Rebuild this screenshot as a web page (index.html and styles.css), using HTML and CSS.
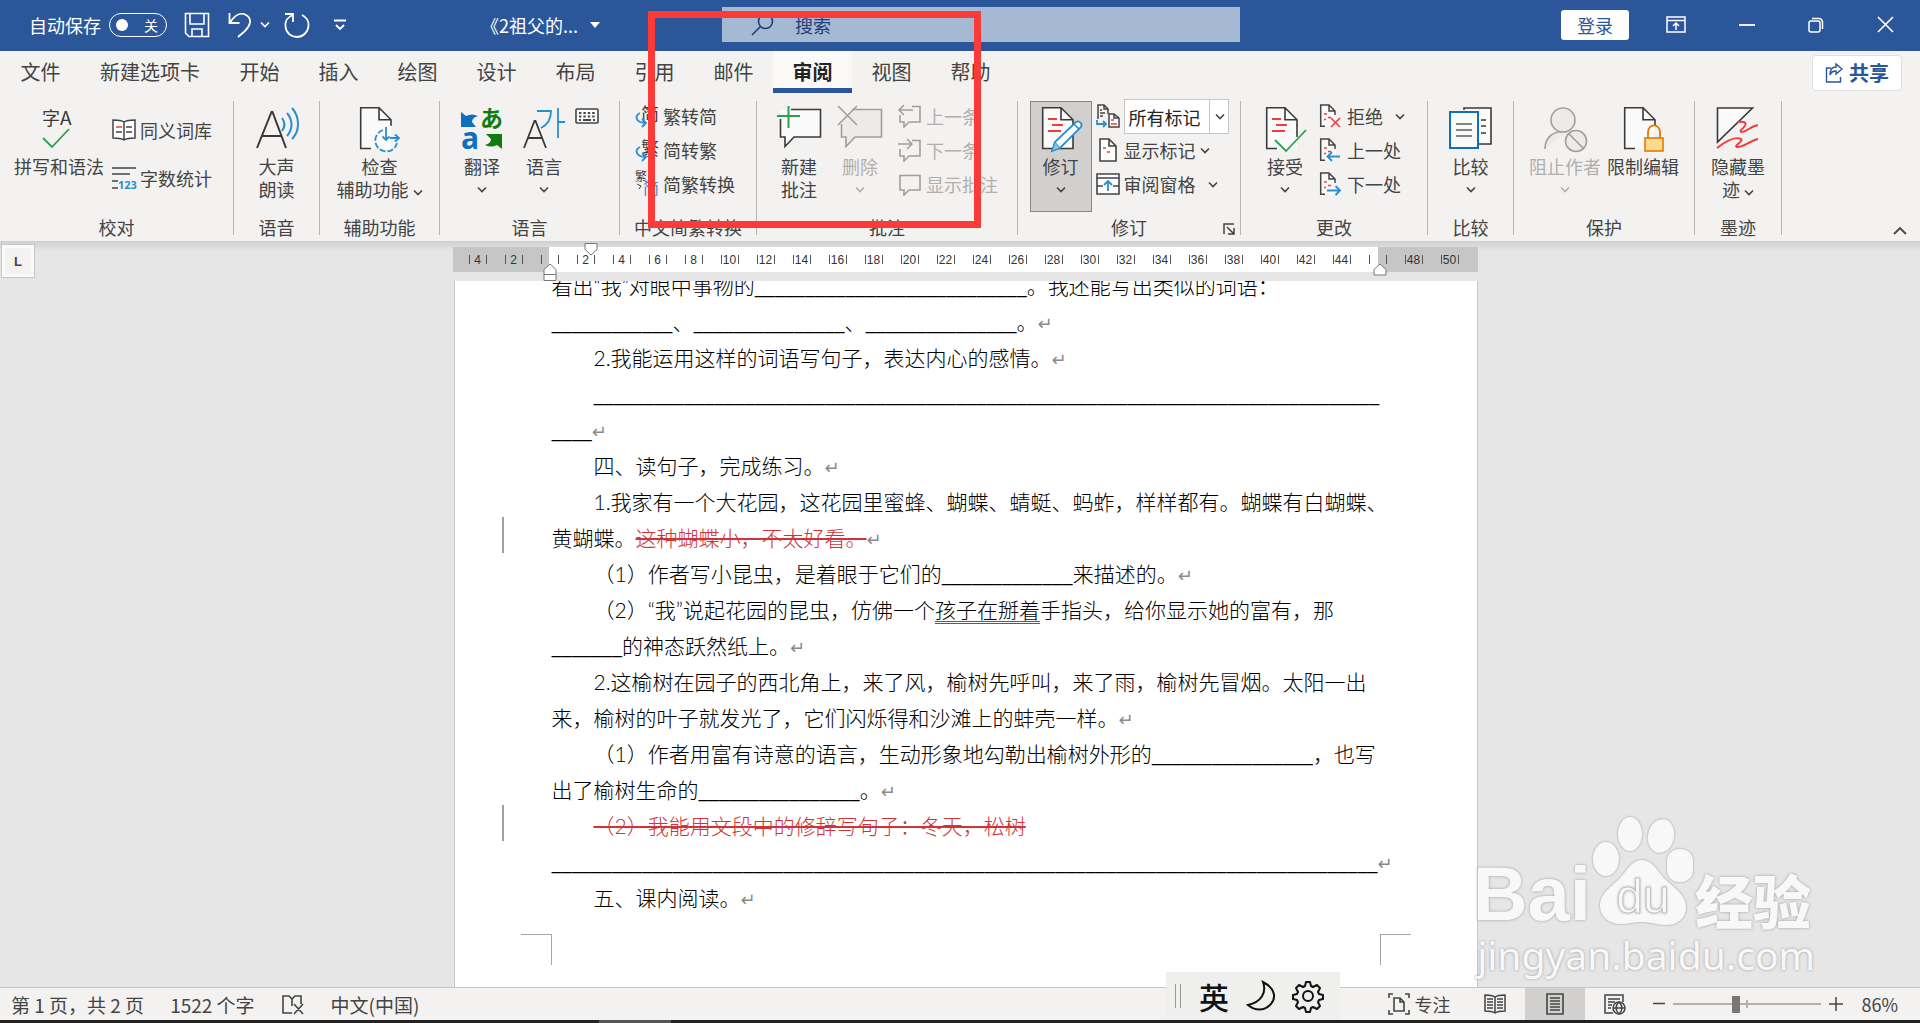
FILE: index.html
```html
<!DOCTYPE html>
<html lang="zh-CN">
  <head>
    <meta charset="UTF-8" />
    <title>《2祖父的园子》 - Word</title>
    <link rel="stylesheet" href="styles.css">
  </head>
  <body>
    <!-- shared icon shapes -->
    <svg class="sprite" aria-hidden="true">
      <symbol id="chevron" viewBox="0 0 10 7"><path d="M1 1.5l4 4 4-4" fill="none" stroke="currentColor" stroke-width="1.6" /></symbol>
      <symbol id="page-sm" viewBox="0 0 24 24">
        <path d="M2.5.8h9l5.500 5.500v16h-14.500z" fill="#fafafa" />
        <path d="M6 22.3H1.700V1H10l6 6v4M10 1v6h6" fill="none" stroke="#444" stroke-width="1.5" />
        <path d="M5 10h3M9 13.5h3M5 15.500h2" stroke="#f23c3c" stroke-width="1.5" />
      </symbol>
      <symbol id="page-lg" viewBox="0 0 44 44">
        <path d="M4 1h19l11 11v30H4z" fill="#fafafa" />
        <path d="M14 41.5H3.700V.8H22l12 12v6M22 .8v12h12" fill="none" stroke="#3b3a39" stroke-width="1.6" />
      </symbol>
      <symbol id="bubble" viewBox="0 0 24 24"><path d="M2 3.5h20V18h-11l-5 5v-5H2z" fill="none" stroke="#a19f9d" stroke-width="1.6" /></symbol>
      <symbol id="bubble-cut" viewBox="0 0 24 24"><path d="M14 2.5h8V18h-11l-5 5v-5H2v-7" fill="none" stroke="#a19f9d" stroke-width="1.6" /></symbol>
    </svg>

    <header class="titlebar">
      <div class="quick">
        <span>自动保存</span>
        <button class="toggle" role="switch" aria-checked="false" aria-label="自动保存"><i></i>关</button>
        <button class="save" aria-label="保存">
          <svg width="26" height="26" viewBox="0 0 26 26" fill="none" stroke="#fff" stroke-width="1.6"><path d="M1.5 1.5h23v23H5l-3.500-3.500zM6 1.5V12h14V1.5M8 24.5V17h10v7.500" /></svg>
        </button>
        <button class="undo" aria-label="撤消">
          <svg width="24" height="26" viewBox="0 0 24 26" fill="none" stroke="#fff" stroke-width="1.8"><path d="M1.5 1v10h10M2 10.5C7 3 13 0 18 3c7 4 4 11-1 16l-7 6" /></svg>
        </button>
        <button class="undo-more" aria-label="撤消选项"><svg width="10" height="7"><use href="#chevron" /></svg></button>
        <button class="redo" aria-label="恢复">
          <svg width="26" height="26" viewBox="0 0 26 26" fill="none" stroke="#fff" stroke-width="1.8"><path d="M1 2h8v8M9 3C3 5 1 10 1.5 14.5 2 21 7 25 13 25s11-5 11.500-11C25 9 22 5 18 3" /></svg>
        </button>
        <button class="customize" aria-label="自定义快速访问工具栏">
          <svg width="12" height="12" viewBox="0 0 12 12" fill="none" stroke="#fff" stroke-width="1.8"><path d="M0 1.5h12M2 6l4 4 4-4" /></svg>
        </button>
      </div>
      <button class="doc-title">《2祖父的... <svg width="10" height="6"><path d="M0 0h10l-5 6z" fill="#fff" /></svg></button>
      <label class="search">
        <svg width="24" height="24" viewBox="0 0 24 24" fill="none" stroke="#1d4079" stroke-width="1.6"><circle cx="14.5" cy="8.5" r="7" /><path d="M9.5 13.5L1 22" /></svg>
        <input type="text" placeholder="搜索" aria-label="搜索" />
      </label>
      <div class="window-tools">
        <button class="login">登录</button>
        <button aria-label="功能区显示选项"><svg width="20" height="17" viewBox="0 0 20 17" fill="none" stroke="#fff" stroke-width="1.5"><path d="M1 1h18v15H1zM1 4.5h18M10 14V7M7 10l3-3 3 3" /></svg></button>
        <button aria-label="最小化"><svg width="16" height="16"><path d="M0 8h16" stroke="#fff" stroke-width="1.8" /></svg></button>
        <button aria-label="还原"><svg width="16" height="16" viewBox="0 0 16 16" fill="none" stroke="#fff" stroke-width="1.5"><rect x="1" y="4" width="11" height="11" rx="2" /><path d="M4 1.5h7a3.500 3.500 0 0 1 3.500 3.500v7" /></svg></button>
        <button aria-label="关闭"><svg width="17" height="17" viewBox="0 0 17 17"><path d="M1 1l15 15M16 1L1 16" stroke="#fff" stroke-width="1.6" /></svg></button>
      </div>
    </header>

    <nav class="tabs">
      <button>文件</button>
      <button>新建选项卡</button>
      <button>开始</button>
      <button>插入</button>
      <button>绘图</button>
      <button>设计</button>
      <button>布局</button>
      <button>引用</button>
      <button>邮件</button>
      <button class="active">审阅</button>
      <button>视图</button>
      <button>帮助</button>
      <button class="share">
        <svg width="18" height="20" viewBox="0 0 18 20" fill="none" stroke="#2b579a" stroke-width="1.4"><path d="M6 5H1.5v14h14v-5M11 1l6 5-6 5V8c-3 0-5 1-6 4 0-5 2-8 6-8z" /></svg>
        共享
      </button>
    </nav>

    <main class="ribbon">
      <section class="group proofing">
        <div class="group-body">
          <button class="big">
            <svg width="44" height="44" viewBox="0 0 44 44"><text x="5" y="18" class="glyph" font-size="18">字</text><text x="23" y="18" class="glyph" font-size="19">A</text><path d="M6 31l9 9 17-18" fill="none" stroke="#2f9e4f" stroke-width="1.8" /></svg>
            <span>拼写和语法</span>
          </button>
          <div class="stack loose">
            <button class="small"><svg width="24" height="24" viewBox="0 0 24 24" fill="none" stroke="#444" stroke-width="1.5"><path d="M12 4C9 2 5 2 1 2v18c4 0 8 0 11 2 3-2 7-2 11-2V2c-4 0-8 0-11 2zv18" fill="#fff" /><path d="M4 9h6" stroke="#f23c3c" /><path d="M4 14h6M14 9h6M14 14h6" /></svg>同义词库</button>
            <button class="small"><svg width="24" height="24" viewBox="0 0 24 24"><path d="M0 2h24M0 8h18M0 15h6M0 22h6" stroke="#444" stroke-width="1.6" /><text x="6" y="23" class="digits">123</text></svg>字数统计</button>
          </div>
        </div>
        <h2>校对</h2>
      </section>

      <section class="group speech">
        <div class="group-body">
          <button class="big">
            <svg width="44" height="44" viewBox="0 0 44 44" fill="none"><path d="M2 41L16.5 5h1L31 41M7 29h19" stroke="#3b3a39" stroke-width="2" /><path d="M27 11c3 4 3 9 0 13M32 6c6 7 6 16 0 23M37 1c8 9 8 23 0 31" stroke="#2b8dd0" stroke-width="2" /></svg>
            <span>大声<br>朗读</span>
          </button>
        </div>
        <h2>语音</h2>
      </section>

      <section class="group access">
        <div class="group-body">
          <button class="big">
            <svg width="44" height="44" viewBox="0 0 44 44"><use href="#page-lg" /><g fill="none" stroke="#2b8dd0" stroke-width="1.8"><path d="M26 23a11 11 0 1 0 14 13" stroke-dasharray="6 2" /><path d="M29 20v13M25.5 29.5L29 33l3.500-3.500M33 31h8M38 27.5l4 3.500-4 3.500" /></g></svg>
            <span>检查<br>辅助功能 <svg width="10" height="7"><use href="#chevron" /></svg></span>
          </button>
        </div>
        <h2>辅助功能</h2>
      </section>

      <section class="group language">
        <div class="group-body">
          <button class="big">
            <svg width="44" height="44" viewBox="0 0 44 44"><path d="M1 5l5 4c4-2 8-2 12 0-4 1-6 3-6 6l4 5H1z" fill="#106ebe" /><text x="20" y="20" class="kana">あ</text><text x="1" y="42" class="latin">a</text><path d="M42 42l-5-4c-4 2-8 2-12 0 4-1 6-3 6-6l-5-5h16z" fill="#107c10" /></svg>
            <span>翻译</span>
            <svg width="10" height="7"><use href="#chevron" /></svg>
          </button>
          <button class="big">
            <svg width="44" height="44" viewBox="0 0 44 44" fill="none"><path d="M2 41l10.500-27h1L24 41M6 31h14" stroke="#3b3a39" stroke-width="1.8" /><path d="M15 4h14c0 9-4 14-10 17M36 1v30M36 15h7" stroke="#2b8dd0" stroke-width="1.8" /></svg>
            <span>语言</span>
            <svg width="10" height="7"><use href="#chevron" /></svg>
          </button>
          <button class="keyboard" aria-label="键盘"><svg width="24" height="16" viewBox="0 0 24 16"><rect x="1" y="1" width="22" height="14" rx="1" fill="#fff" stroke="#444" stroke-width="1.6" /><path d="M4 5h16M4 8.5h16" stroke="#444" stroke-width="2.2" stroke-dasharray="2.4 2" /><path d="M4 12h2m2 0h8m2 0h2" stroke="#444" stroke-width="2" /></svg></button>
        </div>
        <h2>语言</h2>
      </section>

      <section class="group convert">
        <div class="group-body">
          <div class="stack">
            <button class="small"><svg width="24" height="24" viewBox="0 0 24 24"><text x="6" y="17" class="glyph" font-size="18">简</text><path d="M5 9c-6 3-4 10 6 10M7 15l4 4-4 4" fill="none" stroke="#2b8dd0" stroke-width="1.8" /></svg>繁转简</button>
            <button class="small"><svg width="24" height="24" viewBox="0 0 24 24"><text x="6" y="17" class="glyph" font-size="18">繁</text><path d="M5 9c-6 3-4 10 6 10M7 15l4 4-4 4" fill="none" stroke="#2b8dd0" stroke-width="1.8" /></svg>简转繁</button>
            <button class="small"><svg width="24" height="24" viewBox="0 0 24 24"><text x="0" y="9" class="glyph" font-size="12">繁</text><path d="M2 12l4 2-2 3" fill="none" stroke="#444" /><text x="8" y="22" class="glyph blue" font-size="16">简</text></svg>简繁转换</button>
          </div>
        </div>
        <h2>中文简繁转换</h2>
      </section>

      <section class="group comments">
        <div class="group-body">
          <button class="big">
            <svg width="46" height="44" viewBox="0 0 46 44" fill="none"><path d="M4 3h40v28H19L9 40v-9H4z" fill="#fafafa" /><path d="M15 2.5h29.500V30H18l-9 9.500V30H4.500V12" stroke="#3b3a39" stroke-width="1.6" /><path d="M12.5-1v22M1 9h23" stroke="#2f9e4f" stroke-width="2" /></svg>
            <span>新建<br>批注</span>
          </button>
          <button class="big" disabled>
            <svg width="46" height="44" viewBox="0 0 46 44" fill="none"><path d="M15 2.5h29.500V30H18l-9 9.500V30H4.500V17" fill="#edebe9" stroke="#a19f9d" stroke-width="1.6" /><path d="M1-1l19 19M20-1L1 18" stroke="#a19f9d" stroke-width="1.6" /></svg>
            <span>删除</span>
            <svg width="10" height="7"><use href="#chevron" /></svg>
          </button>
          <div class="stack">
            <button class="small" disabled><svg width="24" height="24" viewBox="0 0 24 24"><use href="#bubble-cut" /><path d="M15 6H1M6 1L1 6l5 5" fill="none" stroke="#a19f9d" stroke-width="1.5" /></svg>上一条</button>
            <button class="small" disabled><svg width="24" height="24" viewBox="0 0 24 24"><use href="#bubble-cut" /><path d="M0 6h14M9 1l5 5-5 5" fill="none" stroke="#a19f9d" stroke-width="1.5" /></svg>下一条</button>
            <button class="small" disabled><svg width="24" height="24"><use href="#bubble" /></svg>显示批注</button>
          </div>
        </div>
        <h2>批注</h2>
      </section>

      <section class="group tracking">
        <div class="group-body">
          <button class="big pressed" aria-pressed="true">
            <svg width="44" height="44" viewBox="0 0 44 44"><use href="#page-lg" /><path d="M34 25v16.500H18" fill="none" stroke="#3b3a39" stroke-width="1.6" /><path d="M9 12h9M13 18h11M9 24h13" stroke="#f23c3c" stroke-width="1.8" /><path d="M13 44l3-9 21-20c3-2 7 2 5 5L21 41z" fill="#fff" stroke="#2b8dd0" stroke-width="1.8" /><path d="M13 44l3-9 5 6z" fill="#83c3ec" stroke="#2b8dd0" /><path d="M35 17l5 5" stroke="#2b8dd0" stroke-width="1.5" /></svg>
            <span>修订</span>
            <svg width="10" height="7"><use href="#chevron" /></svg>
          </button>
          <div class="stack">
            <div class="small">
              <svg width="24" height="24" viewBox="0 0 24 24"><g fill="none" stroke="#444" stroke-width="1.5"><path d="M2 15V1h6l4 4v5M8 1v4h4M4 6h2M4 9h5M4 12h3" /><path d="M13 23V10h5l5 4v9zM18 10v4h5" fill="#fff" /></g><path d="M15 16h3M15 20h6" stroke="#f23c3c" stroke-width="1.5" /><path d="M1 16v4h9M7 17l3 3-3 3" fill="none" stroke="#2b8dd0" stroke-width="1.8" /></svg>
              <div class="combo">
                <select aria-label="显示以供审阅"><option>所有标记</option></select>
                <svg width="10" height="7"><use href="#chevron" /></svg>
              </div>
            </div>
            <button class="small"><svg width="24" height="24" viewBox="0 0 24 24"><path d="M4 1h9l7 7v15H4zM13 1v7h7" fill="#fff" stroke="#444" stroke-width="1.6" /><path d="M7 10h3M11 14h3" stroke="#f23c3c" stroke-width="1.6" /></svg>显示标记 <svg width="10" height="7"><use href="#chevron" /></svg></button>
            <button class="small wide"><svg width="24" height="24" viewBox="0 0 24 24" fill="none" stroke="#444" stroke-width="1.6"><path d="M1 2h22v20H1zM1 6h22M1 14h6M17 14h6" fill="#fff" /><path d="M12 19V9M8 13l4-4 4 4" stroke="#2b8dd0" stroke-width="1.8" /></svg>审阅窗格 <svg width="10" height="7"><use href="#chevron" /></svg></button>
          </div>
        </div>
        <h2>修订</h2>
        <button class="launcher" aria-label="修订选项"><svg width="12" height="12" viewBox="0 0 12 12" fill="none" stroke="#444" stroke-width="1.5"><path d="M1 11V1h10M4 4l7 7M11 5v6H5" /></svg></button>
      </section>

      <section class="group changes">
        <div class="group-body">
          <button class="big">
            <svg width="44" height="44" viewBox="0 0 44 44"><use href="#page-lg" /><path d="M9 12h9M13 18h11M9 24h13" stroke="#f23c3c" stroke-width="1.8" /><path d="M34 18v12" stroke="#3b3a39" stroke-width="1.6" /><path d="M12 33l11 11 20-21" fill="none" stroke="#2f9e4f" stroke-width="1.8" /></svg>
            <span>接受</span>
            <svg width="10" height="7"><use href="#chevron" /></svg>
          </button>
          <div class="stack">
            <button class="small wide"><svg width="24" height="24" viewBox="0 0 24 24"><use href="#page-sm" /><path d="M12 14l9 9M21 14l-9 9" stroke="#f23c3c" stroke-width="1.6" /></svg>拒绝 <svg width="10" height="7"><use href="#chevron" /></svg></button>
            <button class="small"><svg width="24" height="24" viewBox="0 0 24 24"><use href="#page-sm" /><path d="M21 18.5H9M13 14l-4.500 4.500L13 23" fill="none" stroke="#2b8dd0" stroke-width="1.8" /></svg>上一处</button>
            <button class="small"><svg width="24" height="24" viewBox="0 0 24 24"><use href="#page-sm" /><path d="M8 18.5h12M16.5 14l4.500 4.500-4.500 4.500" fill="none" stroke="#2b8dd0" stroke-width="1.8" /></svg>下一处</button>
          </div>
        </div>
        <h2>更改</h2>
      </section>

      <section class="group compare">
        <div class="group-body">
          <button class="big">
            <svg width="44" height="44" viewBox="0 0 44 44" fill="#fafafa"><path d="M15 3V1h27v36H30M32 13h5M32 19h5M32 26h5" stroke="#3b3a39" stroke-width="1.6" /><rect x="1" y="5" width="28" height="36" stroke="#106ebe" stroke-width="2" /><path d="M7 17h16M7 23h16M7 29h16" stroke="#605e5c" stroke-width="1.6" /></svg>
            <span>比较</span>
            <svg width="10" height="7"><use href="#chevron" /></svg>
          </button>
        </div>
        <h2>比较</h2>
      </section>

      <section class="group protect">
        <div class="group-body">
          <button class="big" disabled>
            <svg width="44" height="44" viewBox="0 0 44 44" fill="#edebe9" stroke="#a19f9d" stroke-width="1.6"><circle cx="20" cy="13" r="12" /><path d="M2 42c0-10 6-16 14-17h8" /><circle cx="33" cy="34" r="10.5" /><path d="M26 27l15 15" /></svg>
            <span>阻止作者</span>
            <svg width="10" height="7"><use href="#chevron" /></svg>
          </button>
          <button class="big">
            <svg width="44" height="44" viewBox="0 0 44 44"><use href="#page-lg" /><path d="M27 32v-7a5.500 6 0 0 1 12 0v7" fill="none" stroke="#e07b00" stroke-width="1.8" /><rect x="24" y="31" width="18" height="13" fill="#f9db8f" stroke="#e07b00" stroke-width="1.6" /></svg>
            <span>限制编辑</span>
          </button>
        </div>
        <h2>保护</h2>
      </section>

      <section class="group ink">
        <div class="group-body">
          <button class="big">
            <svg width="44" height="44" viewBox="0 0 44 44" fill="none"><path d="M1.5 1h35l-35 34z" fill="#fafafa" stroke="#3b3a39" stroke-width="1.6" /><path d="M22 15c9-1 10 2 3 8-2 3 3 2 6 0s6-4 11-5M1 41c9-7 18-12 24-9 3 2-8 7-4 8 5 1 13-6 21-8" stroke="#f23c3c" stroke-width="2" /></svg>
            <span>隐藏墨<br>迹 <svg width="10" height="7"><use href="#chevron" /></svg></span>
          </button>
        </div>
        <h2>墨迹</h2>
      </section>

      <button class="collapse" aria-label="折叠功能区"><svg width="14" height="9" viewBox="0 0 14 9"><path d="M1 8l6-6 6 6" fill="none" stroke="#444" stroke-width="1.8" /></svg></button>
    </main>

    <div class="workspace">
      <button class="tab-stop" aria-label="制表符">L</button>

      <div class="sheet">
        <div class="ruler">
          <span>4</span><span>2</span><span></span><span>2</span><span>4</span><span>6</span><span>8</span><span>10</span><span>12</span><span>14</span><span>16</span><span>18</span><span>20</span><span>22</span><span>24</span><span>26</span><span>28</span><span>30</span><span>32</span><span>34</span><span>36</span><span>38</span><span>40</span><span>42</span><span>44</span><span></span><span>48</span><span>50</span>
          <svg class="marker first-line" width="14" height="13"><path d="M1 .5h12v6l-6 5.500-6-5.500z" /></svg>
          <svg class="marker hanging" width="14" height="18"><path d="M1 11.5v-5l6-5.500 6 5.500v5zM1 11.5h12v6H1z" /></svg>
          <svg class="marker right-indent" width="14" height="13"><path d="M1 12v-5.500l6-5.500 6 5.500V12z" /></svg>
        </div>

        <article class="page">
          <div class="text">
            <p>看出“我”对眼中事物的<u>___________________________</u>。我还能写出类似的词语：</p>
            <p><u>____________</u>、<u>_______________</u>、<u>_______________</u>。<b>↵</b></p>
            <p class="indent">2.我能运用这样的词语写句子，表达内心的感情。<b>↵</b></p>
            <p class="indent"><u>______________________________________________________________________________</u></p>
            <p><u>____</u><b>↵</b></p>
            <p class="indent">四、读句子，完成练习。<b>↵</b></p>
            <p class="indent">1.我家有一个大花园，这花园里蜜蜂、蝴蝶、蜻蜓、蚂蚱，样样都有。蝴蝶有白蝴蝶、</p>
            <p class="changed">黄蝴蝶。<del>这种蝴蝶小，不太好看。</del><b>↵</b></p>
            <p class="indent">（1）作者写小昆虫，是着眼于它们的<u>_____________</u>来描述的。<b>↵</b></p>
            <p class="indent">（2）“我”说起花园的昆虫，仿佛一个<span class="grammar">孩子在掰着</span>手指头，给你显示她的富有，那</p>
            <p><u>_______</u>的神态跃然纸上。<b>↵</b></p>
            <p class="indent">2.这榆树在园子的西北角上，来了风，榆树先呼叫，来了雨，榆树先冒烟。太阳一出</p>
            <p>来，榆树的叶子就发光了，它们闪烁得和沙滩上的蚌壳一样。<b>↵</b></p>
            <p class="indent">（1）作者用富有诗意的语言，生动形象地勾勒出榆树外形的<u>________________</u>，也写</p>
            <p>出了榆树生命的<u>________________</u>。<b>↵</b></p>
            <p class="indent changed"><del>（2）我能用文段中的修辞写句子：冬天，松树</del></p>
            <p><u>__________________________________________________________________________________</u><b>↵</b></p>
            <p class="indent">五、课内阅读。<b>↵</b></p>
          </div>
          <div class="crop-marks"><i></i><i></i></div>
        </article>
      </div>

      <div class="watermark">
        <div class="brand">
          <span class="bai">Bai</span>
          <span class="paw">
            <svg width="104" height="112" viewBox="0 0 104 112" fill="#f8f8f8"><ellipse cx="15" cy="44" rx="13" ry="17" /><ellipse cx="39" cy="19" rx="12" ry="17" /><ellipse cx="70" cy="21" rx="13" ry="17" transform="rotate(12 70 21)" /><rect x="76" y="34" width="26" height="33" rx="12" /><path d="M51 45c10 0 15 10 21 17 8 9 23 16 23 30 0 12-9 18-20 18-9 0-15-3-24-3s-13 2-21 2c-13 0-21-8-21-18 0-14 13-20 21-29 6-7 11-17 21-17z" /></svg>
            <em>du</em>
          </span>
          <span class="jingyan">经验</span>
        </div>
        <div class="site">jingyan.baidu.com</div>
      </div>
    </div>

    <footer class="status">
      <span>第 1 页，共 2 页</span>
      <span>1522 个字</span>
      <button aria-label="校对错误"><svg width="24" height="21" viewBox="0 0 24 21" fill="none" stroke="#444" stroke-width="1.6"><path d="M11 19H2V2h6l3 3 3-3h6v8M11 5v7M13 10l9 10M22 10l-9 10" /></svg></button>
      <span>中文(中国)</span>
      <div class="views">
        <button class="focus"><svg width="22" height="22" viewBox="0 0 22 22" fill="none" stroke="#444" stroke-width="1.6"><path d="M5 1H1v4M17 1h4v4M5 21H1v-4M17 21h4v-4M6 18V5h6l4 4v9zM12 5v4h4" /></svg>专注</button>
        <button aria-label="阅读视图"><svg width="22" height="20" viewBox="0 0 22 20" fill="none" stroke="#444" stroke-width="1.5"><path d="M11 3C8 1 5 1 1 1v16c4 0 7 0 10 2 3-2 6-2 10-2V1c-4 0-7 0-10 2zv16M3 5h6M3 8h6M3 11h6M3 14h6M13 5h6M13 8h6M13 11h6M13 14h6" /></svg></button>
        <button class="current" aria-label="页面视图"><svg width="18" height="22" viewBox="0 0 18 22" fill="none" stroke="#444" stroke-width="1.6"><path d="M1 1h16v20H1zM4 5h10M4 8h10M4 11h10M4 14h10M4 17h10" /></svg></button>
        <button aria-label="Web 版式视图"><svg width="22" height="21" viewBox="0 0 22 21" fill="none" stroke="#444" stroke-width="1.5"><path d="M9 19H1V1h18v7M4 5h12M4 8h7M4 11h4M4 14h3" /><circle cx="15" cy="14" r="6" /><path d="M9 14h12M15 8c-4 4-4 8 0 12M15 8c4 4 4 8 0 12" /></svg></button>
      </div>
      <div class="zoom">
        <button aria-label="缩小"><svg width="12" height="14"><path d="M0 6.5h12" stroke="#444" stroke-width="1.5" /></svg></button>
        <input type="range" min="10" max="200" value="90" aria-label="缩放" />
        <button aria-label="放大"><svg width="14" height="14"><path d="M0 7h14M7 0v14" stroke="#444" stroke-width="1.5" /></svg></button>
        <span>86%</span>
      </div>
    </footer>
    <div class="taskbar"><i></i></div>

    <div class="ime">
      <i></i>
      <button>英</button>
      <button aria-label="半角"><svg width="28" height="30" viewBox="0 0 28 30" fill="none" stroke="#111" stroke-width="2"><path d="M16 1c12 6 14 16 7 23-6 6-15 6-22 0C14 21 20 12 16 1z" /></svg></button>
      <button aria-label="设置"><svg width="30" height="30" viewBox="0 0 30 30" fill="none" stroke="#111" stroke-width="2" stroke-linejoin="round"><path d="M13 1h4l1 4 2 1 4-2 3 3-2 4 1 2 4 1v4l-4 1-1 2 2 4-3 3-4-2-2 1-1 4h-4l-1-4-2-1-4 2-3-3 2-4-1-2-4-1v-4l4-1 1-2-2-4 3-3 4 2 2-1z" /><circle cx="15" cy="15" r="5" /></svg></button>
    </div>

    <div class="highlight"></div>
  </body>
</html>
```
FILE: styles.css
```css
:root {
  --blue: #2b579a;
  --chrome: #f3f2f1;
  --line: #c6c6c6;
  --text: #444444;
  --muted: #b1afad;
  --red: #fc3a38;
  --deleted: #d13438;
  --ui-font: "Noto Sans CJK SC", sans-serif;
}

* {
  box-sizing: border-box;
}

body {
  position: relative;
  margin: 0;
  height: 100vh;
  display: flex;
  flex-direction: column;
  overflow: hidden;
  font-family: var(--ui-font);
  font-size: 18px;
  color: var(--text);
  background: #e6e6e6;
}

button {
  margin: 0;
  padding: 0;
  border: 0;
  background: none;
  font: inherit;
  color: inherit;
  white-space: nowrap;
}

button:disabled {
  color: var(--muted);
}

svg {
  display: block;
  flex: none;
  overflow: visible;
}

.sprite {
  position: absolute;
  width: 0;
  height: 0;
}

/* title bar */
.titlebar {
  display: grid;
  grid-template-columns: 481fr 241fr 518fr 680fr;
  align-items: center;
  height: 51px;
  flex: none;
  padding-bottom: 2px;
  background: var(--blue);
  color: #fff;
}

.quick {
  display: flex;
  align-items: center;
  padding-left: 29px;
}

.toggle {
  display: flex;
  align-items: center;
  justify-content: space-between;
  width: 58px;
  height: 24px;
  margin: 0 17px 0 8px;
  padding: 0 8px 0 6px;
  border: 1px solid #fff;
  border-radius: 12px;
  font-size: 14px;
}

.toggle i {
  width: 12px;
  height: 12px;
  border-radius: 50%;
  background: #fff;
}

.save {
  margin-right: 18px;
}

.undo {
  margin-right: 8px;
}

.undo-more {
  margin-right: 14px;
}

.redo {
  margin-right: 24px;
}

.doc-title {
  display: flex;
  align-items: center;
  gap: 12px;
}

.search {
  display: flex;
  align-items: center;
  gap: 20px;
  height: 35px;
  padding-left: 29px;
  background: #a6b9d3;
}

.search input {
  flex: 1;
  min-width: 0;
  padding: 0;
  border: 0;
  outline: 0;
  background: none;
  font: inherit;
}

.search input::placeholder {
  color: #1d4079;
}

.window-tools {
  display: flex;
  align-items: center;
  justify-content: flex-end;
  gap: 53px;
  padding-right: 26px;
}

.login {
  width: 68px;
  height: 30px;
  margin-right: -16px;
  border-radius: 3px;
  background: #fff;
  color: var(--blue);
  line-height: 30px;
}

/* tabs */
.tabs {
  display: flex;
  height: 42px;
  flex: none;
  padding-left: 1px;
  background: var(--chrome);
}

.tabs button {
  min-width: 79px;
  padding: 0 20px;
  font-size: 20px;
  line-height: 42px;
}

.tabs button:not(:nth-child(2)) {
  padding: 0;
}

.tabs .active {
  border-bottom: 5px solid var(--blue);
  background: #faf9f8;
  font-weight: 700;
  color: #252423;
}

.tabs .share {
  display: flex;
  align-items: center;
  justify-content: center;
  gap: 6px;
  width: 90px;
  height: 36px;
  margin: 4px 18px 0 auto;
  border: 1px solid #e1dfdd;
  border-radius: 4px;
  background: #fff;
  color: var(--blue);
  font-weight: 700;
}

/* ribbon */
.ribbon {
  position: relative;
  display: flex;
  flex: none;
  height: 148px;
  padding: 8px 0 6px;
  background: var(--chrome);
}

.group {
  position: relative;
  display: flex;
  flex-direction: column;
  border-right: 1px solid #b8b6b4;
}

.group-body {
  display: flex;
  flex: 1;
  justify-content: center;
}

.group h2 {
  margin: 0;
  font-size: 18px;
  font-weight: 400;
  line-height: 16px;
  text-align: center;
  white-space: nowrap;
}

.big {
  display: flex;
  flex-direction: column;
  align-items: center;
  align-self: flex-start;
  gap: 4px;
  padding-top: 6px;
  line-height: 23px;
}

.big > svg:last-child {
  margin-top: 4px;
}

.big span svg {
  display: inline-block;
  vertical-align: middle;
}

.pressed {
  width: 62px;
  height: 111px;
  border: 1px solid #8a8886;
  background: #d2d0ce;
  padding-top: 5px;
}

.stack {
  display: flex;
  flex-direction: column;
  margin-top: -2px;
}

.stack.loose {
  gap: 14px;
  padding-top: 14px;
}

.small {
  display: flex;
  align-items: center;
  gap: 4px;
  height: 34px;
  line-height: 34px;
}

.small.wide > svg:last-child {
  margin-left: 8px;
}

.combo {
  position: relative;
}

.combo select {
  display: block;
  width: 105px;
  height: 35px;
  padding: 0 4px;
  border: 1px solid var(--line);
  border-radius: 0;
  appearance: none;
  background: linear-gradient(to left, #fff 18px, var(--line) 18px, var(--line) 19px, #fff 19px);
  font: inherit;
  color: #252423;
}

.combo svg {
  position: absolute;
  right: 4px;
  top: 14px;
  pointer-events: none;
}

.glyph {
  font-family: var(--ui-font);
  fill: #3b3a39;
}

.glyph.blue {
  fill: #2b8dd0;
}

.digits {
  font: 700 11px "Open Sans", sans-serif;
  fill: #2b8dd0;
}

.kana {
  font: 700 23px "Noto Sans CJK JP", sans-serif;
  fill: #107c10;
}

.latin {
  font: 700 30px "Open Sans", sans-serif;
  fill: #106ebe;
}

.keyboard {
  align-self: flex-start;
  padding-top: 7px;
}

.proofing {
  width: 234px;
}

.proofing .group-body {
  justify-content: flex-start;
  gap: 8px;
  padding-left: 14px;
}

.speech {
  width: 86px;
}

.access {
  width: 120px;
}

.language {
  width: 180px;
}

.language .group-body {
  gap: 18px;
}

.language .keyboard {
  margin-left: -9px;
}

.convert {
  width: 137px;
}

.convert .group-body {
  justify-content: flex-start;
  padding-left: 15px;
}

.comments {
  width: 261px;
}

.comments .group-body {
  gap: 15px;
}

.tracking {
  width: 223px;
}

.tracking .group-body {
  gap: 4px;
}

.changes {
  width: 187px;
}

.changes .group-body {
  gap: 12px;
}

.compare {
  width: 86px;
}

.protect {
  width: 181px;
}

.protect .group-body {
  gap: 6px;
}

.ink {
  width: 87px;
}

.launcher {
  position: absolute;
  right: 5px;
  bottom: 0;
}

.collapse {
  align-self: flex-end;
  margin: 0 13px 0 auto;
}

/* document area */
.workspace {
  position: relative;
  display: flex;
  justify-content: center;
  flex: 1;
  min-height: 0;
  overflow: hidden;
  padding-left: 10px;
  background: linear-gradient(#cfcfcf, #e6e6e6 10px);
}

.tab-stop {
  position: absolute;
  left: 2px;
  top: 4px;
  width: 32px;
  height: 32px;
  border: 3px solid #fafafa;
  outline: 1px solid var(--line);
  background: var(--chrome);
  font: 700 13px/28px "Liberation Sans", sans-serif;
}

.sheet {
  display: flex;
  flex-direction: column;
  width: 1025px;
}

.ruler {
  position: relative;
  display: flex;
  align-items: center;
  flex: none;
  height: 25px;
  margin-top: 6px;
  padding-left: 7px;
  background: linear-gradient(to right, #c6c6c6 96px, #fff 96px, #fff 925px, #c6c6c6 925px);
}

.ruler span {
  display: flex;
  justify-content: center;
  width: 18px;
  height: 9px;
  margin: 0 9px;
  border: solid #555;
  border-width: 0 1px;
  font: 12px/10px "Liberation Sans", sans-serif;
  color: #333;
}

.marker {
  position: absolute;
  fill: #fff;
  stroke: #777;
}

.first-line {
  left: 131px;
  top: -4px;
}

.hanging {
  left: 90px;
  top: 16px;
}

.right-indent {
  left: 920px;
  top: 16px;
}

.page {
  flex: 1;
  min-height: 0;
  overflow: hidden;
  margin: 9px 0 0 1px;
  padding: 0 97px;
  border: solid var(--line);
  border-width: 0 1px;
  background: #fff;
  color: #000;
  font-family: Lato, "Noto Sans CJK SC", sans-serif;
  font-weight: 300;
  font-size: 21px;
  line-height: 36px;
}

.text {
  margin-top: -13px;
}

.text p {
  position: relative;
  height: 36px;
  margin: 0;
  white-space: nowrap;
}

.text .indent {
  padding-left: 42px;
}

.text u {
  font: 23px/1 "Open Sans", sans-serif;
  text-decoration: none;
}

.text b {
  font: 18px/1 "DejaVu Sans", sans-serif;
  color: #8a8a8a;
}

.text del {
  color: var(--deleted);
}

.grammar {
  text-decoration: underline double #2b5fd0 1px;
  text-underline-offset: 3px;
}

/* revision bar in the left margin */
.changed::before {
  content: "";
  position: absolute;
  left: -50px;
  bottom: 3px;
  width: 2px;
  height: 36px;
  background: #a0a0a0;
}

.crop-marks {
  display: flex;
  justify-content: space-between;
  margin: 18px -31px 0;
}

.crop-marks i {
  width: 31px;
  height: 31px;
  border: solid #a6a6a6;
  border-width: 1px 1px 0 0;
}

.crop-marks i:last-child {
  border-width: 1px 0 0 1px;
}

.watermark {
  position: absolute;
  right: 105px;
  bottom: 4px;
  color: #f8f8f8;
  text-shadow: 0 0 3px #999;
}

.brand {
  display: flex;
  align-items: flex-end;
  padding-right: 4px;
  line-height: 56px;
}

.bai {
  font: 700 76px/66px "Liberation Sans", sans-serif;
}

.paw {
  position: relative;
  filter: drop-shadow(0 0 1px #999);
}

.paw em {
  position: absolute;
  left: 0;
  right: 0;
  bottom: 10px;
  font: 400 48px/40px "Liberation Sans", sans-serif;
  text-align: center;
  -webkit-text-stroke: 1px #c4c4c4;
}

.jingyan {
  font-size: 58px;
  font-weight: 900;
}

.site {
  font: 39px/56px "Noto Sans", sans-serif;
  text-align: right;
}

/* status bar */
.status {
  display: flex;
  align-items: center;
  flex: none;
  gap: 26px;
  height: 33px;
  padding: 0 22px 0 11px;
  border-top: 1px solid var(--line);
  background: var(--chrome);
}

.status > span {
  font-size: 19px;
}

.views {
  display: flex;
  align-items: center;
  align-self: stretch;
  margin-left: auto;
}

.views button {
  display: flex;
  align-items: center;
  justify-content: center;
  gap: 4px;
  width: 60px;
  height: 100%;
}

.views .focus {
  width: 64px;
  margin-right: 14px;
}

.views .current {
  background: #d2d0ce;
}

.zoom {
  display: flex;
  align-items: center;
  gap: 8px;
  margin-left: -18px;
}

.zoom span {
  margin-left: 10px;
}

.zoom input {
  width: 148px;
  height: 18px;
  margin: 0;
  appearance: none;
  background: linear-gradient(#b3b0ad, #b3b0ad) center / 100% 2px no-repeat,
    linear-gradient(#b3b0ad, #b3b0ad) center / 2px 8px no-repeat;
}

.zoom input::-webkit-slider-thumb {
  appearance: none;
  width: 8px;
  height: 17px;
  background: #797775;
}

.taskbar {
  display: flex;
  flex: none;
  height: 3px;
  background: #222;
}

.taskbar i {
  width: 72px;
  margin-left: 599px;
  background: #555;
}

/* floating input method bar */
.ime {
  position: absolute;
  right: 580px;
  bottom: 3px;
  display: flex;
  align-items: center;
  gap: 18px;
  width: 174px;
  height: 48px;
  padding-left: 9px;
  background: #efefee;
  color: #111;
  font-size: 30px;
  font-weight: 500;
  line-height: 48px;
}

.ime i {
  width: 6px;
  height: 24px;
  border: solid #999;
  border-width: 0 1px;
}

.highlight {
  position: absolute;
  left: 648px;
  top: 11px;
  width: 333px;
  height: 217px;
  border: 7px solid var(--red);
  pointer-events: none;
}
```
